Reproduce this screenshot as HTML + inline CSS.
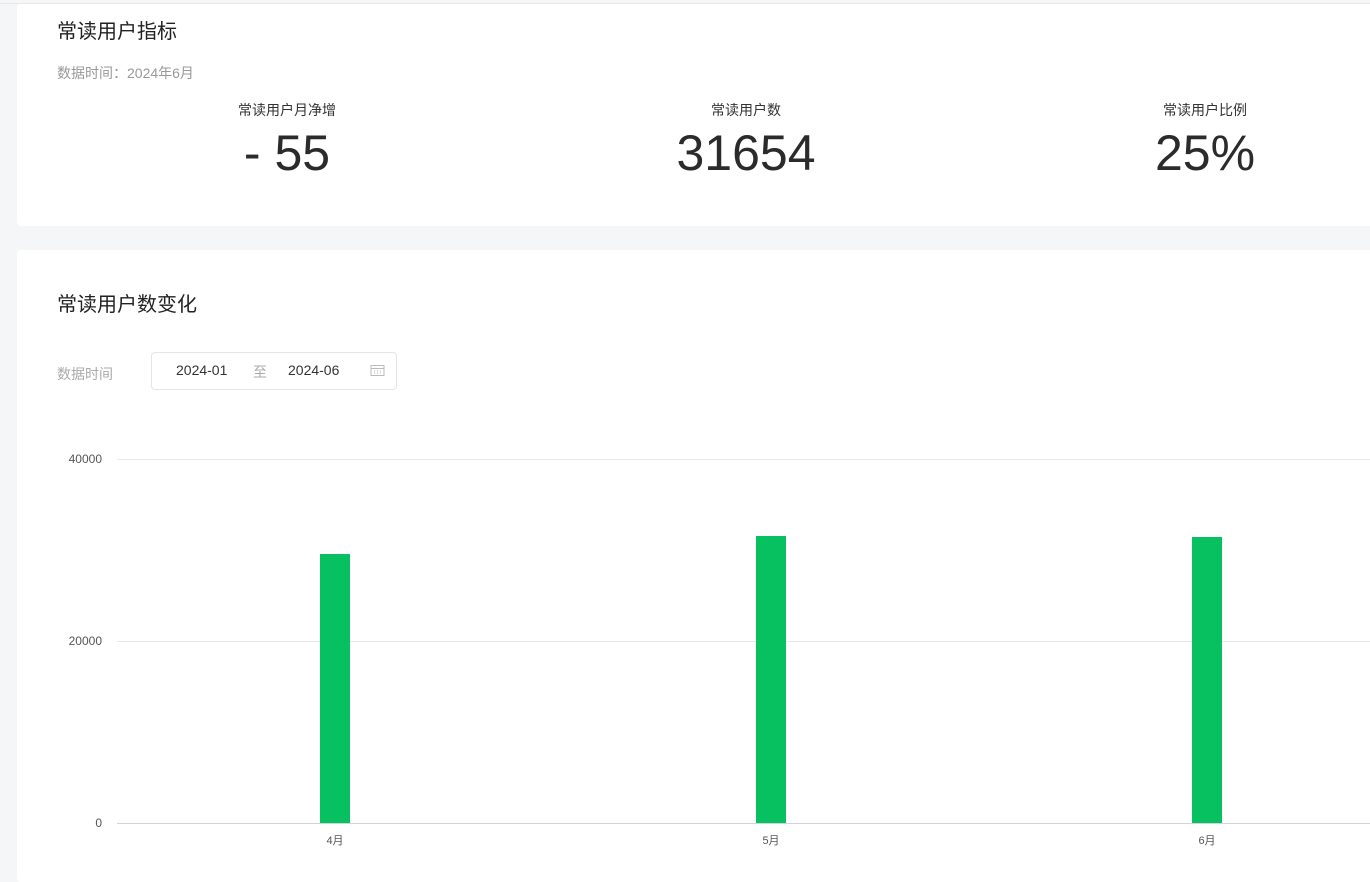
<!DOCTYPE html>
<html><head><meta charset="utf-8"><style>
body{margin:0;width:1370px;height:882px;background:#f5f6f8;font-family:"Liberation Sans","Noto Sans CJK SC",sans-serif;overflow:hidden;position:relative}
.card{position:absolute;left:17px;right:0;background:#fff;border-radius:4px 0 0 4px}
.a{position:absolute;white-space:nowrap}
.lab{font-size:14px;color:#333;transform:translateX(-50%)}
.num{font-size:50px;color:#2b2b2b;transform:translateX(-50%);font-weight:300}
.grid{position:absolute;left:117px;right:0;height:1px;background:#e6e8ec}
.yl{position:absolute;font-size:12px;color:#555;right:1268px}
.bar{position:absolute;width:30px;background:#07c160;bottom:59px}
.xl{position:absolute;font-size:11px;color:#555;top:832px;transform:translateX(-50%)}
</style></head><body>
<div style="position:absolute;left:0;right:0;top:3px;height:1px;background:#e8e8e8"></div>
<div class="card" style="top:4px;height:222px">
</div>
<div class="a" style="left:57px;top:15px;font-size:20px;color:#222">常读用户指标</div>
<div class="a" style="left:57px;top:63px;font-size:14px;color:#999">数据时间：2024年6月</div>
<div class="a lab" style="left:287px;top:100px">常读用户月净增</div>
<div class="a num" style="left:287px;top:124px">- 55</div>
<div class="a lab" style="left:746px;top:100px">常读用户数</div>
<div class="a num" style="left:746px;top:124px">31654</div>
<div class="a lab" style="left:1205px;top:100px">常读用户比例</div>
<div class="a num" style="left:1205px;top:124px">25%</div>

<div class="card" style="top:250px;bottom:0"></div>
<div class="a" style="left:57px;top:288px;font-size:20px;color:#222">常读用户数变化</div>
<div class="a" style="left:57px;top:364px;font-size:14px;color:#aaa">数据时间</div>
<div style="position:absolute;left:151px;top:352px;width:244px;height:36px;border:1px solid #e3e5e8;border-radius:4px"></div>
<div class="a" style="left:176px;top:362px;font-size:14px;color:#333">2024-01</div>
<div class="a" style="left:253px;top:362px;font-size:14px;color:#aaa">至</div>
<div class="a" style="left:288px;top:362px;font-size:14px;color:#333">2024-06</div>
<svg style="position:absolute;left:370px;top:364px" width="16" height="13" viewBox="0 0 16 13"><rect x="1" y="1.5" width="13" height="10" fill="none" stroke="#bbb"/><line x1="1" y1="4.5" x2="14" y2="4.5" stroke="#bbb"/><g fill="#bbb"><rect x="4" y="6.5" width="1" height="1"/><rect x="7" y="6.5" width="1" height="1"/><rect x="10" y="6.5" width="1" height="1"/><rect x="4" y="8.5" width="1" height="1"/><rect x="7" y="8.5" width="1" height="1"/><rect x="10" y="8.5" width="1" height="1"/></g></svg>

<div class="grid" style="top:459px"></div>
<div class="grid" style="top:641px"></div>
<div class="grid" style="top:823px;background:#cfd4dc"></div>
<div class="yl" style="top:452px">40000</div>
<div class="yl" style="top:634px">20000</div>
<div class="yl" style="top:816px">0</div>
<div class="bar" style="left:320px;top:554px"></div>
<div class="bar" style="left:756px;top:536px"></div>
<div class="bar" style="left:1192px;top:537px"></div>
<div class="xl" style="left:335px">4月</div>
<div class="xl" style="left:771px">5月</div>
<div class="xl" style="left:1207px">6月</div>
</body></html>
